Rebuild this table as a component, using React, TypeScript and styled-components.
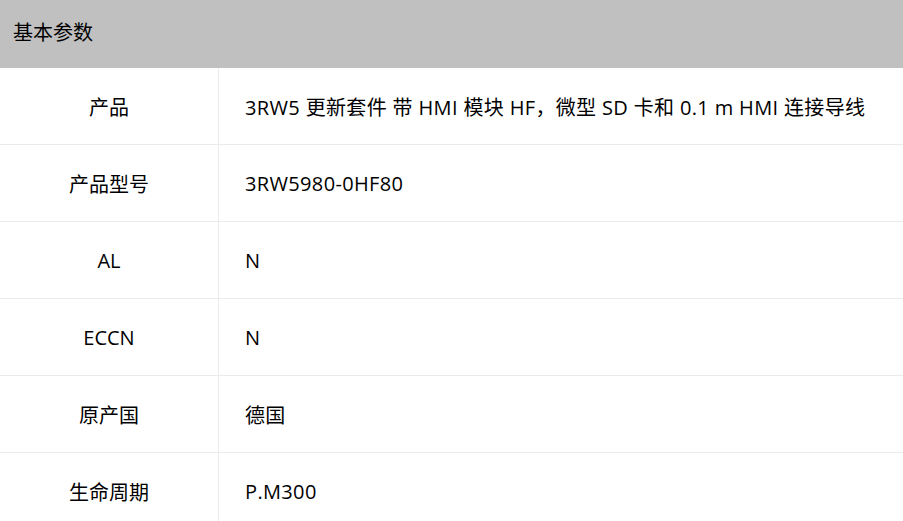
import React from "react";
import styled, { createGlobalStyle } from "styled-components";

const Global = createGlobalStyle`
  html, body { margin: 0; padding: 0; background: #fff; }
  body { font-family: "Open Sans", "Noto Sans CJK SC", sans-serif; color: #000; }
`;

const Wrap = styled.div`
  width: 903px;
`;

const Header = styled.div`
  height: 68px;
  background: #c0c0c0;
  display: flex;
  align-items: center;
  padding-left: 13px;
  font-size: 20px;
  padding-bottom: 6px;
  box-sizing: border-box;
`;

const Row = styled.div`
  display: grid;
  grid-template-columns: 219px 1fr;
  height: 77px;
  border-bottom: 1px solid #ebebeb;
  box-sizing: border-box;
`;

const Label = styled.div`
  display: flex;
  align-items: center;
  justify-content: center;
  border-right: 1px solid #ebebeb;
  font-size: 20px;
`;

const Value = styled.div`
  display: flex;
  align-items: center;
  padding-left: 26px;
  font-size: 20px;
  letter-spacing: 0.35px;
  white-space: nowrap;
`;

const rows: [string, string][] = [
  ["产品", "3RW5 更新套件 带 HMI 模块 HF，微型 SD 卡和 0.1 m HMI 连接导线"],
  ["产品型号", "3RW5980-0HF80"],
  ["AL", "N"],
  ["ECCN", "N"],
  ["原产国", "德国"],
  ["生命周期", "P.M300"],
];

export default function App() {
  return (
    <Wrap>
      <Global />
      <Header>基本参数</Header>
      {rows.map(([k, v]) => (
        <Row key={k}>
          <Label>{k}</Label>
          <Value>{v}</Value>
        </Row>
      ))}
    </Wrap>
  );
}
